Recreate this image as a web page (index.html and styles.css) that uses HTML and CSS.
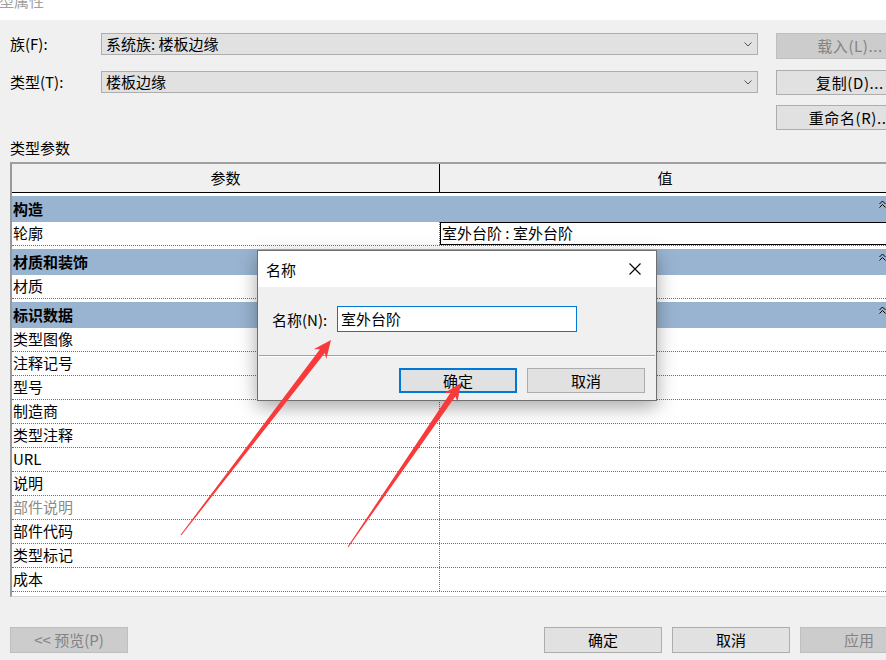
FILE: index.html
```html
<!DOCTYPE html>
<html lang="zh-CN">

<head>
  <meta charset="UTF-8" />
  <meta name="viewport" content="width=device-width, initial-scale=1.0" />
  <title>类型属性</title>
  <link rel="stylesheet" href="styles.css">
</head>

<body>
  <div class="titlebar"><span class="title">类型属性</span></div>

  <div class="window">
    <div class="row row-family">
      <label class="lbl">族(F):</label>
      <div class="select">
        <span>系统族: 楼板边缘</span>
        <svg class="chev" width="8" height="5" viewBox="0 0 8 5"><polyline points="0.5,0.5 4,4 7.5,0.5" fill="none" stroke="#555" stroke-width="1" /></svg>
      </div>
      <button class="btn side disabled">载入(L)...</button>
    </div>
    <div class="row row-type">
      <label class="lbl">类型(T):</label>
      <div class="select">
        <span>楼板边缘</span>
        <svg class="chev" width="8" height="5" viewBox="0 0 8 5"><polyline points="0.5,0.5 4,4 7.5,0.5" fill="none" stroke="#555" stroke-width="1" /></svg>
      </div>
      <button class="btn side">复制(D)...</button>
    </div>
    <div class="row row-rename">
      <button class="btn side">重命名(R)...</button>
    </div>

    <div class="section-title">类型参数</div>

    <div class="grid">
      <div class="ghead">
        <div class="hcell name">参数</div>
        <div class="hcell">值</div>
      </div>
      <div class="gbody">
        <div class="group"><span>构造</span><svg class="fold" width="7" height="8" viewBox="0 0 7 8"><polyline points="0.5,4 3.5,1 6.5,4" fill="none" stroke="#000" /><polyline points="0.5,7.5 3.5,4.5 6.5,7.5" fill="none" stroke="#000" /></svg></div>
        <div class="prow"><div class="pname">轮廓</div><div class="pval"><span class="editbox">室外台阶 : 室外台阶</span></div></div>

        <div class="group"><span>材质和装饰</span><svg class="fold" width="7" height="8" viewBox="0 0 7 8"><polyline points="0.5,4 3.5,1 6.5,4" fill="none" stroke="#000" /><polyline points="0.5,7.5 3.5,4.5 6.5,7.5" fill="none" stroke="#000" /></svg></div>
        <div class="prow"><div class="pname">材质</div><div class="pval"></div></div>

        <div class="group"><span>标识数据</span><svg class="fold" width="7" height="8" viewBox="0 0 7 8"><polyline points="0.5,4 3.5,1 6.5,4" fill="none" stroke="#000" /><polyline points="0.5,7.5 3.5,4.5 6.5,7.5" fill="none" stroke="#000" /></svg></div>
        <div class="prow"><div class="pname">类型图像</div><div class="pval"></div></div>
        <div class="prow"><div class="pname">注释记号</div><div class="pval"></div></div>
        <div class="prow"><div class="pname">型号</div><div class="pval"></div></div>
        <div class="prow"><div class="pname">制造商</div><div class="pval"></div></div>
        <div class="prow"><div class="pname">类型注释</div><div class="pval"></div></div>
        <div class="prow"><div class="pname">URL</div><div class="pval"></div></div>
        <div class="prow"><div class="pname">说明</div><div class="pval"></div></div>
        <div class="prow"><div class="pname muted">部件说明</div><div class="pval"></div></div>
        <div class="prow"><div class="pname">部件代码</div><div class="pval"></div></div>
        <div class="prow"><div class="pname">类型标记</div><div class="pval"></div></div>
        <div class="prow"><div class="pname">成本</div><div class="pval"></div></div>
      </div>
    </div>

    <div class="footer">
      <button class="btn wide disabled">&lt;&lt; 预览(P)</button>
      <div class="spacer"></div>
      <button class="btn wide">确定</button>
      <button class="btn wide">取消</button>
      <button class="btn wide disabled">应用</button>
    </div>

    <div class="dialog">
      <div class="dlg-title">
        <span>名称</span>
        <svg width="12" height="12" viewBox="0 0 12 12"><path d="M0.5 0.5 L11.5 11.5 M11.5 0.5 L0.5 11.5" stroke="#000" stroke-width="1.1" fill="none" /></svg>
      </div>
      <div class="dlg-field">
        <label class="dlg-lbl">名称(N):</label>
        <div class="dlg-input">室外台阶</div>
      </div>
      <div class="dlg-sep"></div>
      <div class="dlg-actions">
        <button class="btn dlg-btn primary">确定</button>
        <button class="btn dlg-btn">取消</button>
      </div>
    </div>
  </div>

  <svg class="marks" width="886" height="660" viewBox="0 0 886 660">
    <polygon points="180.6,534.7 320.0,349.3 313.7,349.3 331,340 326.3,359.1 324.8,352.9 181.4,535.3" fill="#f83a3a" />
    <polygon points="347.6,546.7 450.5,392.8 444.2,393.3 461,383 457.4,402.3 455.5,396.2 348.4,547.3" fill="#f83a3a" />
  </svg>
</body>

</html>
```

FILE: styles.css
```css
* {
  padding: 0;
  margin: 0;
  box-sizing: border-box;
}

html,
body {
  width: 886px;
  height: 660px;
  overflow: hidden;
}

body {
  position: relative;
  background: #f0f0f0;
  color: #000;
  font-family: "Noto Sans CJK SC", "DejaVu Sans", sans-serif;
  font-size: 15px;
}

.titlebar {
  height: 20px;
  background: #fff;
  overflow: hidden;
}

.titlebar .title {
  display: block;
  margin: -9px 0 0 -16px;
  line-height: 20px;
  color: #a0a0a0;
}

.window {
  position: relative;
  width: 920px;
  height: 640px;
  padding: 13px 0 0 10px;
}

/* top form */
.row {
  display: flex;
  align-items: flex-start;
}

.row-type {
  margin-top: 11px;
}

.row-rename {
  margin-top: 10px;
  padding-left: 766px;
}

.lbl {
  flex: none;
  width: 91px;
  line-height: 22px;
}

.select {
  flex: none;
  display: flex;
  align-items: center;
  justify-content: space-between;
  width: 657px;
  height: 22px;
  padding: 0 5px 0 4px;
  background: #e1e1e1;
  border: 1px solid #adadad;
  line-height: 20px;
}

.row-type .lbl,
.row-type .select {
  margin-top: 1px;
}

.btn {
  flex: none;
  font-family: inherit;
  font-size: 15px;
  color: #000;
  background: #e1e1e1;
  border: 1px solid #adadad;
  line-height: 20px;
}

.btn.disabled {
  background: #cccccc;
  border-color: #bfbfbf;
  color: #838383;
}

.btn.side {
  width: 148px;
  height: 25px;
  margin-left: 18px;
  letter-spacing: 0.6px;
}

.row-family .btn.side {
  height: 26px;
}

.row-rename .btn.side {
  margin-left: 0;
}

.section-title {
  margin-top: 9px;
  line-height: 17px;
}

/* parameter grid */
.grid {
  width: 880px;
  margin-top: 6px;
  background: #fff;
  border-top: 2px solid #a0a0a0;
  border-left: 2px solid #999;
  border-bottom: 1px solid #d4d4d4;
  padding-bottom: 4px;
}

.ghead {
  display: flex;
  height: 29px;
  background: #f0f0f0;
  border-bottom: 1px solid #000;
}

.hcell {
  flex: 1;
  text-align: center;
  line-height: 28px;
}

.hcell.name {
  flex: none;
  width: 428px;
  border-right: 1px solid #000;
}

.group {
  display: flex;
  justify-content: space-between;
  align-items: flex-start;
  height: 29px;
  padding-left: 1px;
  background: #99b4d1;
  border-top: 3px solid #fff;
  font-weight: bold;
  line-height: 25px;
}

.group .fold {
  margin: 4px 4px 0 0;
}

.prow {
  display: flex;
  height: 24px;
  border-bottom: 1px dotted #707070;
}

.pname {
  width: 428px;
  padding-left: 1px;
  border-right: 1px dotted #707070;
  line-height: 22px;
}

.pname.muted {
  color: #8a8a8a;
}

.pval {
  flex: 1;
}

.editbox {
  display: block;
  height: 23px;
  padding-left: 1px;
  border: 1px solid #000;
  line-height: 20px;
}

/* bottom buttons */
.footer {
  display: flex;
  gap: 10px;
  margin-top: 30px;
  padding-right: 2px;
}

.footer .spacer {
  flex: 1;
}

.btn.wide {
  width: 118px;
  height: 26px;
}

/* name dialog */
.dialog {
  position: absolute;
  left: 257px;
  top: 230px;
  width: 400px;
  height: 151px;
  background: #f0f0f0;
  border: 1px solid #6f6f6f;
  box-shadow: 0 6px 18px rgba(0, 0, 0, 0.35);
}

.dlg-title {
  display: flex;
  align-items: center;
  justify-content: space-between;
  height: 36px;
  padding: 0 15px 0 8px;
  background: #fff;
}

.dlg-field {
  display: flex;
  align-items: center;
  padding: 19px 0 0 14px;
}

.dlg-lbl {
  width: 65px;
}

.dlg-input {
  width: 240px;
  height: 26px;
  padding-left: 3px;
  background: #fff;
  border: 1px solid #0078d7;
  line-height: 23px;
}

.dlg-sep {
  margin: 23px 1px 0;
  border-top: 1px solid #a0a0a0;
  border-bottom: 1px solid #fff;
}

.dlg-actions {
  display: flex;
  justify-content: flex-end;
  gap: 10px;
  padding: 11px 11px 0 0;
}

.btn.dlg-btn {
  width: 118px;
  height: 25px;
}

.btn.primary {
  border: 2px solid #0078d7;
}

.marks {
  position: absolute;
  left: 0;
  top: 0;
  pointer-events: none;
}
```
